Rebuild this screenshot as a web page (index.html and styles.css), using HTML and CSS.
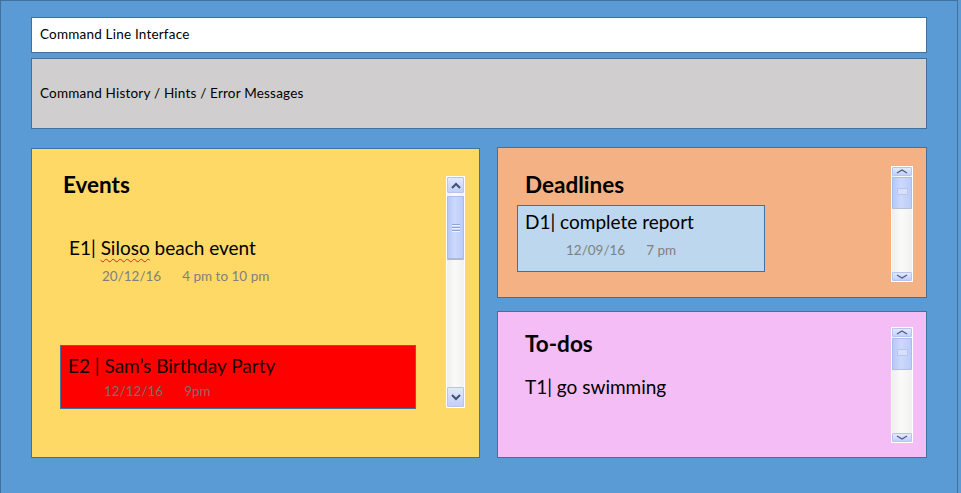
FILE: index.html
```html
<!DOCTYPE html>
<html>
<head>
<meta charset="utf-8">
<link rel="stylesheet" href="styles.css">
</head>
<body>
<div class="app">
  <div class="cli">Command Line Interface</div>
  <div class="history">Command History / Hints / Error Messages</div>
  <div class="panels">
    <section class="panel events">
      <div class="panel-body">
        <h2 class="title ev-title">Events</h2>
        <div class="item-title e1-title">E1| <span class="misspelled">Siloso</span> beach event</div>
        <div class="item-sub e1-sub"><span class="date">20/12/16</span><span>4 pm to 10 pm</span></div>
        <div class="card card-red">
          <div class="item-title">E2 | Sam’s Birthday Party</div>
          <div class="item-sub red-sub"><span class="date">12/12/16</span><span>9pm</span></div>
        </div>
      </div>
      <div class="sb sb-big">
        <div class="sb-btn"><svg width="10" height="7" viewBox="0 0 10 7"><polyline points="1,6 5,2 9,6" fill="none" stroke="#3E5275" stroke-width="2"/></svg></div>
        <div class="sb-thumb"><span class="grip"></span><span class="grip"></span><span class="grip"></span></div>
        <div class="sb-track"></div>
        <div class="sb-btn sb-btn-down"><svg width="10" height="7" viewBox="0 0 10 7"><polyline points="1,1 5,5 9,1" fill="none" stroke="#3E5275" stroke-width="2"/></svg></div>
      </div>
    </section>
    <div class="right-col">
      <section class="panel deadlines">
        <div class="panel-body">
          <h2 class="title side-title dl-title">Deadlines</h2>
          <div class="card card-blue">
            <div class="item-title">D1| complete report</div>
            <div class="item-sub blue-sub"><span class="date">12/09/16</span><span>7 pm</span></div>
          </div>
        </div>
        <div class="sb sb-small">
          <div class="sb-btn"><svg width="12" height="5" viewBox="0 0 12 5"><polyline points="1,4 6,1 11,4" fill="none" stroke="#4A5C80" stroke-width="1.2"/></svg></div>
          <div class="sb-thumb"><span class="knob"></span></div>
          <div class="sb-track"></div>
          <div class="sb-btn"><svg width="12" height="5" viewBox="0 0 12 5"><polyline points="1,1 6,4 11,1" fill="none" stroke="#4A5C80" stroke-width="1.2"/></svg></div>
        </div>
      </section>
      <section class="panel todos">
        <div class="panel-body">
          <h2 class="title side-title td-title">To-dos</h2>
          <div class="item-title t1-title">T1| go swimming</div>
        </div>
        <div class="sb sb-small sb-todo">
          <div class="sb-btn"><svg width="12" height="5" viewBox="0 0 12 5"><polyline points="1,4 6,1 11,4" fill="none" stroke="#4A5C80" stroke-width="1.2"/></svg></div>
          <div class="sb-thumb"><span class="knob"></span></div>
          <div class="sb-track"></div>
          <div class="sb-btn"><svg width="12" height="5" viewBox="0 0 12 5"><polyline points="1,1 6,4 11,1" fill="none" stroke="#4A5C80" stroke-width="1.2"/></svg></div>
        </div>
      </section>
    </div>
  </div>
</div>
</body>
</html>
```

FILE: styles.css
```css
html, body {
  margin: 0;
  padding: 0;
  overflow: hidden;
  background: #5B9BD5;
  font-family: Lato, "Open Sans", sans-serif;
  color: #000;
}

.app {
  width: 958px;
  height: 493px;
  box-sizing: border-box;
  border: 1px solid #41719C;
  border-bottom: 0;
  padding: 16px 0 0 30px;
}

.cli {
  width: 896px;
  height: 36px;
  box-sizing: border-box;
  border: 1px solid #41719C;
  background: #FFFFFF;
  font-size: 13.5px;
  letter-spacing: 0.2px;
  line-height: 16px;
  padding: 8px 0 0 8px;
}

.history {
  width: 896px;
  height: 71px;
  margin-top: 5px;
  box-sizing: border-box;
  border: 1px solid #41719C;
  background: #D0CECE;
  font-size: 13.5px;
  letter-spacing: 0.2px;
  line-height: 16px;
  padding: 26px 0 0 8px;
}

.panels {
  display: flex;
  align-items: flex-start;
  gap: 17px;
  width: 896px;
  margin-top: 18px;
}

.panel {
  box-sizing: border-box;
  border: 1px solid #41719C;
  display: flex;
  align-items: flex-start;
}

.panel-body {
  flex: 1;
  min-width: 0;
}

.events {
  width: 449px;
  height: 310px;
  margin-top: 1px;
  background: #FFD966;
}

.right-col {
  width: 430px;
  display: flex;
  flex-direction: column;
  gap: 13px;
}

.deadlines {
  height: 151px;
  background: #F4B183;
}

.todos {
  height: 147px;
  background: #F5BDF5;
}

.title {
  margin: 0;
  font-size: 22.5px;
  line-height: 26.4px;
  font-weight: 700;
}

.ev-title {
  margin: 23px 0 0 31px;
}

.side-title {
  margin-left: 27px;
}

.dl-title {
  margin-top: 24px;
}

.td-title {
  margin-top: 19px;
}

.item-title {
  font-size: 19px;
  line-height: 22.2px;
  white-space: nowrap;
}

.item-sub {
  font-size: 13.5px;
  line-height: 15.6px;
  color: #7F7F7F;
  white-space: nowrap;
}

.item-sub .date {
  margin-right: 21px;
}

.e1-title {
  margin: 39px 0 0 37px;
}

.e1-sub {
  margin: 9.6px 0 0 70px;
}

.misspelled {
  text-decoration: underline wavy #E02020;
  text-decoration-thickness: 1px;
  text-underline-offset: 3px;
}

.card {
  box-sizing: border-box;
  border: 1px solid #41719C;
}

.card-red {
  width: 356px;
  height: 64px;
  margin: 60px 0 0 28px;
  background: #FF0000;
  padding: 9px 0 0 7px;
}

.card-red .item-title {
  color: #1A0000;
}

.red-sub {
  margin: 6.7px 0 0 36px;
  color: #7A6E6E;
}

.card-blue {
  width: 248px;
  height: 67px;
  margin: 6.6px 0 0 19px;
  background: #BDD7EE;
  padding: 5px 0 0 7px;
}

.blue-sub {
  margin: 9.4px 0 0 41px;
}

.t1-title {
  margin: 19px 0 0 27px;
}

/* scrollbars */
.sb {
  flex: none;
  box-sizing: border-box;
  border: 1px solid #FFFFFF;
  display: flex;
  flex-direction: column;
  background: linear-gradient(90deg, #EEEEEC 0%, #FAFAF8 45%, #F1F1EF 100%);
}

.sb-big {
  width: 19px;
  height: 232px;
  margin: 27px 14px 0 0;
}

.sb-small {
  width: 22px;
  height: 116px;
  margin: 18px 13px 0 0;
}

.sb-todo {
  margin-top: 15px;
}

.sb-btn {
  flex: none;
  box-sizing: border-box;
  border: 1px solid #B6C4EE;
  border-radius: 1px;
  background: linear-gradient(180deg, #E3E9FB 0%, #C3CFF6 100%);
  display: flex;
  align-items: center;
  justify-content: center;
}

.sb-big .sb-btn {
  height: 16px;
}

.sb-big .sb-btn-down {
  height: 20px;
}

.sb-small .sb-btn {
  height: 9px;
}

.sb-thumb {
  flex: none;
  box-sizing: border-box;
  border: 1px solid #A9BCEE;
  border-radius: 1px;
  background: linear-gradient(90deg, #B8C9F6 0%, #CCD9FC 45%, #BCCCF7 100%);
  display: flex;
  flex-direction: column;
  align-items: center;
  justify-content: center;
  gap: 1px;
}

.sb-big .sb-thumb {
  height: 64px;
  margin-top: 3px;
  border-bottom: 2px solid #B0B8CC;
}

.sb-small .sb-thumb {
  height: 32px;
  margin-top: 1px;
  border-bottom: 1px solid #B5BFD6;
}

.grip {
  width: 8px;
  height: 1px;
  background: #8FA3D4;
  border-bottom: 1px solid #EEF2FF;
}

.knob {
  width: 9px;
  height: 5px;
  background: #D6E0FB;
  border: 1px solid #B7C6EE;
  margin-top: -4px;
}

.sb-track {
  flex: 1;
}
```
